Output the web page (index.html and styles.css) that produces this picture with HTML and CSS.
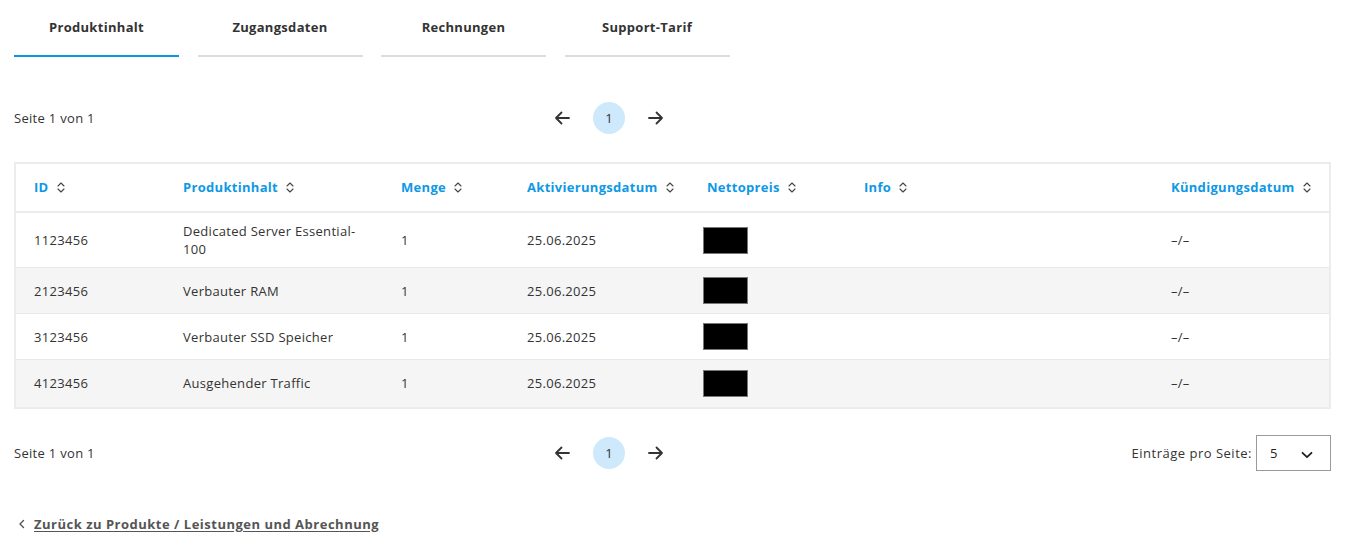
FILE: index.html
```html
<!DOCTYPE html>
<html lang="de">
<head>
<meta charset="utf-8">
<title>Produktinhalt</title>
<link rel="stylesheet" href="styles.css">
</head>
<body>
<div class="page">
  <nav class="tabs">
    <div class="tab active">Produktinhalt</div>
    <div class="tab">Zugangsdaten</div>
    <div class="tab">Rechnungen</div>
    <div class="tab">Support-Tarif</div>
  </nav>

  <div class="pager-row top">
    <div class="page-info">Seite 1 von 1</div>
    <div class="pager">
      <button class="arrow" aria-label="Zurück"><svg width="16" height="14" viewBox="0 0 16 14"><path d="M15 7H2M7.5 1.5L2 7l5.5 5.5" fill="none" stroke="#333" stroke-width="1.8" stroke-linecap="round" stroke-linejoin="round"/></svg></button>
      <span class="page-num">1</span>
      <button class="arrow" aria-label="Weiter"><svg width="16" height="14" viewBox="0 0 16 14"><path d="M1 7h13M8.5 1.5L14 7l-5.5 5.5" fill="none" stroke="#333" stroke-width="1.8" stroke-linecap="round" stroke-linejoin="round"/></svg></button>
    </div>
    <div class="per-page placeholder"></div>
  </div>

  <div class="table-wrap">
    <table class="grid">
      <colgroup>
        <col class="c-id"><col class="c-prod"><col class="c-menge"><col class="c-akt"><col class="c-netto"><col class="c-info"><col>
      </colgroup>
      <thead>
        <tr>
          <th>ID<span class="sort"></span></th>
          <th>Produktinhalt<span class="sort"></span></th>
          <th>Menge<span class="sort"></span></th>
          <th>Aktivierungsdatum<span class="sort"></span></th>
          <th>Nettopreis<span class="sort"></span></th>
          <th>Info<span class="sort"></span></th>
          <th>Kündigungsdatum<span class="sort"></span></th>
        </tr>
      </thead>
      <tbody>
        <tr>
          <td>1123456</td>
          <td><span class="wrap">Dedicated Server Essential-100</span></td>
          <td>1</td>
          <td>25.06.2025</td>
          <td><span class="redacted"></span></td>
          <td></td>
          <td>–/–</td>
        </tr>
        <tr>
          <td>2123456</td>
          <td>Verbauter RAM</td>
          <td>1</td>
          <td>25.06.2025</td>
          <td><span class="redacted"></span></td>
          <td></td>
          <td>–/–</td>
        </tr>
        <tr>
          <td>3123456</td>
          <td>Verbauter SSD Speicher</td>
          <td>1</td>
          <td>25.06.2025</td>
          <td><span class="redacted"></span></td>
          <td></td>
          <td>–/–</td>
        </tr>
        <tr>
          <td>4123456</td>
          <td>Ausgehender Traffic</td>
          <td>1</td>
          <td>25.06.2025</td>
          <td><span class="redacted"></span></td>
          <td></td>
          <td>–/–</td>
        </tr>
      </tbody>
    </table>
  </div>

  <div class="pager-row bottom">
    <div class="page-info">Seite 1 von 1</div>
    <div class="pager">
      <button class="arrow" aria-label="Zurück"><svg width="16" height="14" viewBox="0 0 16 14"><path d="M15 7H2M7.5 1.5L2 7l5.5 5.5" fill="none" stroke="#333" stroke-width="1.8" stroke-linecap="round" stroke-linejoin="round"/></svg></button>
      <span class="page-num">1</span>
      <button class="arrow" aria-label="Weiter"><svg width="16" height="14" viewBox="0 0 16 14"><path d="M1 7h13M8.5 1.5L14 7l-5.5 5.5" fill="none" stroke="#333" stroke-width="1.8" stroke-linecap="round" stroke-linejoin="round"/></svg></button>
    </div>
    <div class="per-page">
      <span class="per-label">Einträge pro Seite:</span>
      <div class="select">
        <span>5</span>
        <svg width="12" height="8" viewBox="0 0 12 8"><path d="M1.5 1.8L6 6.2l4.5-4.4" fill="none" stroke="#222" stroke-width="1.8" stroke-linecap="round" stroke-linejoin="round"/></svg>
      </div>
    </div>
  </div>

  <a class="back" href="#">
    <svg width="8" height="10" viewBox="0 0 8 10"><path d="M5.5 1.5L2 5l3.5 3.5" fill="none" stroke="#555" stroke-width="1.4" stroke-linecap="round" stroke-linejoin="round"/></svg>
    <span>Zurück zu Produkte / Leistungen und Abrechnung</span>
  </a>
</div>
</body>
</html>
```

FILE: styles.css
```css
* { box-sizing: border-box; }

html, body {
  margin: 0;
  padding: 0;
  background: #fff;
}

body {
  font-family: "Open Sans", "Noto Sans", "Liberation Sans", sans-serif;
  font-size: 13px;
  letter-spacing: 0.3px;
  color: #333;
}

.page {
  padding: 0 14px;
}

/* Tabs */
.tabs {
  display: flex;
  gap: 18.5px;
}

.tab {
  width: 165px;
  padding: 18px 0 19px;
  line-height: 18px;
  text-align: center;
  font-weight: 700;
  font-size: 13px;
  color: #333;
  border-bottom: 2px solid #dcdcdc;
}

.tab.active {
  border-bottom-color: #0d95e3;
}

/* Pager rows */
.pager-row {
  display: flex;
  align-items: center;
  justify-content: space-between;
}

.pager-row.top {
  margin-top: 45px;
  height: 32px;
}

.pager-row.bottom {
  margin-top: 26px;
  height: 36px;
}

.page-info {
  width: 74px;
  color: #333;
  white-space: nowrap;
}

.pager {
  display: flex;
  align-items: center;
  gap: 15px;
}

.arrow {
  width: 32px;
  height: 32px;
  padding: 0;
  border: 0;
  background: transparent;
  display: flex;
  align-items: center;
  justify-content: center;
}

.page-num {
  width: 32px;
  height: 32px;
  border-radius: 50%;
  background: #cde9fb;
  display: flex;
  align-items: center;
  justify-content: center;
  color: #333;
  font-size: 13px;
}

.per-page {
  width: 201px;
  flex-shrink: 0;
  display: flex;
  align-items: center;
  justify-content: flex-end;
  gap: 4px;
}

.per-page.placeholder {
  visibility: hidden;
}

.per-label {
  white-space: nowrap;
  color: #333;
  letter-spacing: 0.5px;
}

.select {
  flex-shrink: 0;
  width: 75px;
  height: 36px;
  border: 1px solid #9a9a9a;
  display: flex;
  align-items: center;
  justify-content: space-between;
  padding: 1px 17px 0 13px;
  color: #222;
}

.select svg {
  margin-top: 3px;
}

/* Table */
.table-wrap {
  margin-top: 28px;
  border: 2px solid #e9eded;
}

.grid {
  width: 100%;
  border-collapse: collapse;
  table-layout: fixed;
}

.c-id { width: 149px; }
.c-prod { width: 218px; }
.c-menge { width: 126px; }
.c-akt { width: 180px; }
.c-netto { width: 157px; }
.c-info { width: 307px; }

.grid th {
  height: 48px;
  padding: 0 0 2px 18px;
  text-align: left;
  font-weight: 700;
  color: #0e98e6;
  white-space: nowrap;
  border-bottom: 2px solid #e9eded;
}

.grid td {
  padding: 9px 20px 9px 18px;
  line-height: 18px;
  vertical-align: middle;
  color: #333;
}

.grid tbody tr {
  height: 46px;
  border-bottom: 1px solid #e7eaea;
}

.grid tbody tr:first-child {
  height: 55px;
}

.grid tbody tr:last-child {
  height: 47px;
  border-bottom: 0;
}

.grid tbody tr:nth-child(even) {
  background: #f5f5f5;
}

.wrap {
  display: block;
  max-width: 185px;
}

.redacted {
  display: block;
  width: 45px;
  height: 27px;
  margin-left: -4px;
  background: #000;
  border: 1px solid #777;
}

.sort {
  display: inline-block;
  width: 8px;
  height: 11px;
  margin-left: 8px;
  vertical-align: -1px;
  background:
    url("data:image/svg+xml;utf8,<svg xmlns='http://www.w3.org/2000/svg' width='8' height='11' viewBox='0 0 8 11'><path d='M1 4L4 1l3 3M1 7l3 3 3-3' fill='none' stroke='%23444' stroke-width='1.1' stroke-linecap='round' stroke-linejoin='round'/></svg>") no-repeat center;
}

/* Back link */
.back {
  margin-top: 44px;
  display: inline-flex;
  align-items: center;
  gap: 8px;
  padding-left: 4px;
  color: #555;
  font-weight: 700;
  font-size: 13px;
  line-height: 18px;
  letter-spacing: 0.5px;
  text-decoration: none;
}

.back span {
  text-decoration: underline;
  text-underline-offset: 2px;
}
```
